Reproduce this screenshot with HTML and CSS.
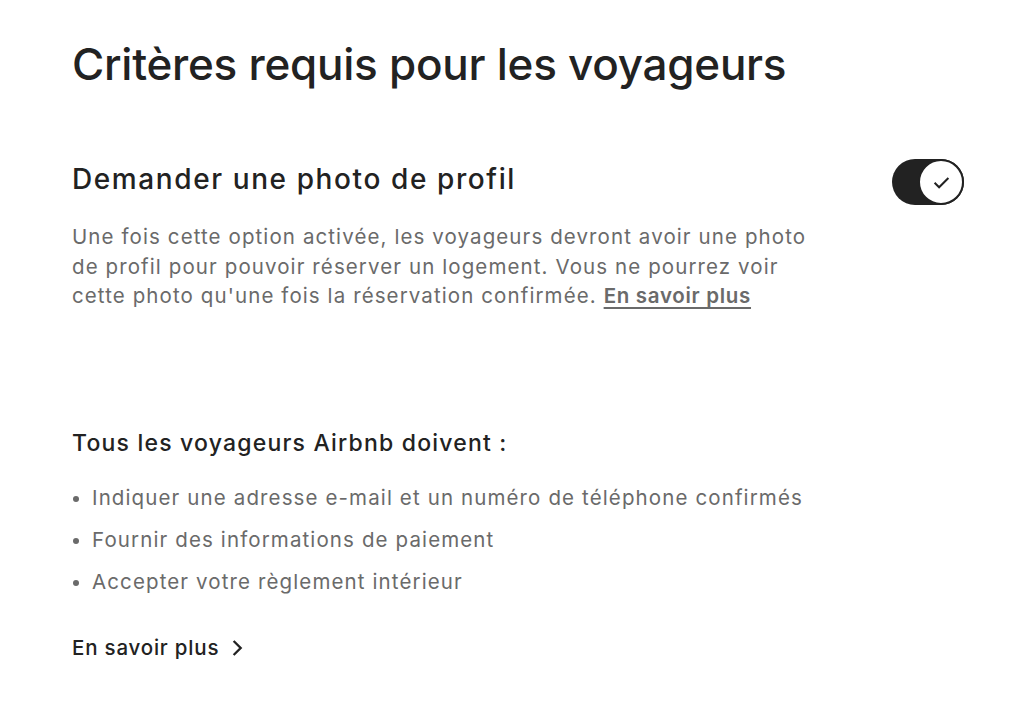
FILE: index.html
```html
<!DOCTYPE html>
<html lang="fr">
<head>
<meta charset="utf-8">
<title>Critères requis pour les voyageurs</title>
<link rel="stylesheet" href="styles.css">
</head>
<body>
<main class="page">
  <h1 class="title">Critères requis pour les voyageurs</h1>

  <section class="setting">
    <div class="setting-text">
      <h2 class="setting-title">Demander une photo de profil</h2>
      <p class="setting-desc">Une fois cette option activée, les voyageurs devront avoir une photo de profil pour pouvoir réserver un logement. Vous ne pourrez voir cette photo qu'une fois la réservation confirmée. <a class="inline-link" href="#">En savoir plus</a></p>
    </div>
    <button class="toggle" type="button" aria-pressed="true" aria-label="Demander une photo de profil">
      <span class="knob">
        <svg viewBox="0 0 32 32" width="17" height="17" aria-hidden="true"><path d="M3 16.5l8.5 8.5L29 7.5" fill="none" stroke="#222" stroke-width="3.8"/></svg>
      </span>
    </button>
  </section>

  <section class="requirements">
    <h3 class="req-title">Tous les voyageurs Airbnb doivent :</h3>
    <ul class="req-list">
      <li>Indiquer une adresse e-mail et un numéro de téléphone confirmés</li>
      <li>Fournir des informations de paiement</li>
      <li>Accepter votre règlement intérieur</li>
    </ul>
    <a class="more-link" href="#">En savoir plus<svg viewBox="0 0 32 32" width="18" height="18" aria-hidden="true"><path d="M10 3.5l12.5 12.5L10 28.5" fill="none" stroke="#222" stroke-width="4.2"/></svg></a>
  </section>
</main>
</body>
</html>
```

FILE: styles.css
```css
* { box-sizing: border-box; }
html, body { margin: 0; padding: 0; background: #fff; }
body {
  font-family: "Inter", "Noto Sans", sans-serif;
  color: #222;
  -webkit-font-smoothing: antialiased;
}
.page {
  padding: 36px 60px 0 72px;
}
.title {
  margin: 0;
  font-size: 44px;
  font-weight: 500;
  line-height: 56px;
  letter-spacing: -0.25px;
}
.setting {
  display: flex;
  justify-content: space-between;
  align-items: flex-start;
  margin-top: 69px;
}
.setting-text { width: 752px; }
.setting-title {
  margin: 0;
  font-size: 28px;
  font-weight: 500;
  line-height: 36px;
  letter-spacing: 1.6px;
}
.setting-desc {
  margin: 25px 0 0;
  font-size: 20.5px;
  line-height: 29.5px;
  letter-spacing: 1.1px;
  color: #6a6a6a;
}
.inline-link {
  color: #6a6a6a;
  font-weight: 600;
  letter-spacing: 0.7px;
  text-decoration: underline;
  text-decoration-thickness: 2px;
  text-underline-offset: 4px;
}
.toggle {
  margin: -2px 0 0 0;
  width: 72px;
  height: 46px;
  border: none;
  border-radius: 23px;
  background: #222;
  padding: 0;
  display: flex;
  justify-content: flex-end;
  align-items: center;
  cursor: pointer;
  flex-shrink: 0;
}
.knob {
  width: 46px;
  height: 46px;
  border-radius: 50%;
  background: #fff;
  border: 2px solid #222;
  display: flex;
  align-items: center;
  justify-content: center;
}
.requirements { margin-top: 117px; }
.req-title {
  margin: 0;
  font-size: 23px;
  font-weight: 500;
  line-height: 30px;
  letter-spacing: 1.2px;
}
.req-list {
  margin: 19px 0 0;
  padding: 0 0 0 20px;
  color: #6a6a6a;
  font-size: 20.5px;
  line-height: 42px;
  letter-spacing: 1.12px;
}
.req-list li::marker { font-size: 20px; letter-spacing: 0; }
.more-link {
  display: flex;
  width: fit-content;
  align-items: center;
  gap: 9px;
  margin-top: 30px;
  color: #222;
  font-size: 20.5px;
  font-weight: 500;
  letter-spacing: 0.8px;
  text-decoration: none;
  line-height: 30px;
}
```
